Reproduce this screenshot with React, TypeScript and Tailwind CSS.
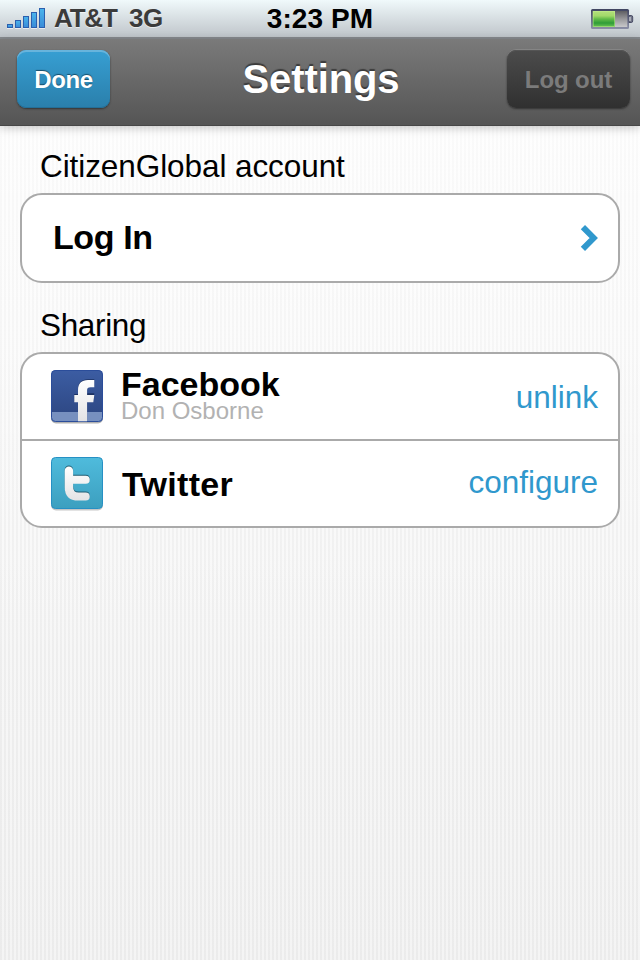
import React from "react";

function SignalBars() {
  const bars = [
    [7, 24, 4],
    [15, 20, 8],
    [23, 16, 12],
    [31, 12, 16],
    [39, 8, 20],
  ];
  return (
    <svg width="46" height="37" viewBox="0 0 46 37" className="shrink-0">
      <defs>
        <linearGradient id="bar" x1="0" y1="0" x2="0" y2="1">
          <stop offset="0" stopColor="#49b4ec" />
          <stop offset="1" stopColor="#3a8bd8" />
        </linearGradient>
      </defs>
      {bars.map(([x, y, h]) => (
        <g key={x}>
          <rect x={x} y={y + 1} width="6" height={h} fill="#fff" opacity=".6" />
          <rect x={x + 0.5} y={y + 0.5} width="5" height={h - 1} fill="url(#bar)" stroke="#2b5fae" />
        </g>
      ))}
    </svg>
  );
}

function Battery() {
  return (
    <svg width="44" height="22" viewBox="0 0 44 22" className="shrink-0">
      <defs>
        <linearGradient id="charge" x1="0" y1="0" x2="0" y2="1">
          <stop offset="0" stopColor="#b4e07c" />
          <stop offset=".3" stopColor="#a2d96a" />
          <stop offset=".5" stopColor="#62bb48" />
          <stop offset=".75" stopColor="#2f9c38" />
          <stop offset="1" stopColor="#6bc455" />
        </linearGradient>
        <linearGradient id="empty" x1="0" y1="0" x2="0" y2="1">
          <stop offset="0" stopColor="#5e5e62" />
          <stop offset=".5" stopColor="#98989b" />
          <stop offset="1" stopColor="#c8c8ca" />
        </linearGradient>
        <linearGradient id="case" x1="0" y1="0" x2="0" y2="1">
          <stop offset="0" stopColor="#3f4460" />
          <stop offset="1" stopColor="#8b8fa6" />
        </linearGradient>
      </defs>
      <rect x="1" y="1" width="38" height="20" rx="1.5" fill="url(#case)" />
      <rect x="2.8" y="3" width="22.2" height="16" fill="url(#charge)" />
      <rect x="3.3" y="3.5" width="21.2" height="15" fill="none" stroke="#c6f08e" strokeOpacity=".5" />
      <rect x="25" y="3" width="12.3" height="16" fill="url(#empty)" />
      <path d="M39 7.500h2.200q1.500 0 1.500 1.500v4q0 1.500-1.500 1.500H39z" fill="#737789" stroke="#4a4e66" />
      <rect x="39" y="9" width="2" height="4" fill="#a9acb8" />
    </svg>
  );
}

function FacebookIcon() {
  return (
    <svg width="54" height="55" viewBox="0 0 54 55" className="shrink-0">
      <defs>
        <linearGradient id="fb" x1="0" y1="0" x2="0" y2="1">
          <stop offset="0" stopColor="#3c5da3" />
          <stop offset="1" stopColor="#2c4580" />
        </linearGradient>
        <linearGradient id="glyph" x1="0" y1="0" x2="0" y2="1">
          <stop offset="0" stopColor="#ffffff" />
          <stop offset="1" stopColor="#e3e3e5" />
        </linearGradient>
        <clipPath id="fbclip">
          <rect x="1" y="0" width="52" height="52" rx="4.500" />
        </clipPath>
      </defs>
      <rect x="1" y="1.500" width="52" height="52" rx="5" fill="#000" opacity=".3" />
      <g clipPath="url(#fbclip)">
        <rect x="1" width="52" height="52" fill="url(#fb)" />
        <rect x="1" y="42" width="52" height="10" fill="#7790bf" />
        <rect x="1.500" y=".5" width="51" height="51" rx="4" fill="none" stroke="#2b4d9a" />
        <path
          d="M28 51V31.300H24.300V24H28V19.500C28 12.500 31.500 9.200 38 9.200H44.300V16.400H40.500C38 16.400 37.100 17.300 37.100 19.700V23.200H44.300L43.300 31H37.100V51Z"
          fill="#1d3263"
        />
        <path
          d="M28 51.200V32.200H24.300V24.900H28V20.400C28 13.400 31.500 10.100 38 10.100H44.300V17.200H40.500C38 17.200 37.100 18.100 37.100 20.500V24.900H44.300L43.300 32.200H37.100V51.200Z"
          fill="url(#glyph)"
        />
      </g>
    </svg>
  );
}

function TwitterIcon() {
  const shape =
    "M13.500 12.700a4.200 4.200 0 0 1 8.400 0V17.700H34.500a4.050 4.050 0 0 1 0 8.100H21.900V29q0 5.500 5.500 5.500H34.500a4.050 4.050 0 0 1 0 8.100H27q-13.500 0-13.500-13.600Z";
  return (
    <svg width="54" height="55" viewBox="0 0 54 55" className="shrink-0">
      <defs>
        <linearGradient id="tw" x1="0" y1="0" x2="0" y2="1">
          <stop offset="0" stopColor="#4fbbdc" />
          <stop offset="1" stopColor="#3c9fbf" />
        </linearGradient>
      </defs>
      <rect x="1" y="1.500" width="52" height="52" rx="5" fill="#000" opacity=".22" />
      <rect x="1.500" y=".5" width="51" height="51" rx="4" fill="url(#tw)" stroke="#2690c4" />
      <g transform="translate(1.200 0)">
        <path d={shape} fill="#1f5c72" />
        <path d={shape} fill="url(#glyph)" transform="translate(0 1)" />
      </g>
    </svg>
  );
}

export default function App() {
  return (
    <div className="flex h-[960px] w-[640px] flex-col overflow-hidden bg-linear-to-b from-[#fdfdfd] to-[#f4f4f4] font-['Liberation_Sans',Arial,sans-serif] text-black">
      <div className="flex h-full flex-col bg-[linear-gradient(180deg,rgba(255,255,255,0.7),rgba(255,255,255,0)_70%),repeating-linear-gradient(90deg,rgba(0,0,0,0.035)_0px,rgba(0,0,0,0.035)_2px,transparent_2px,transparent_4px)]">
        <div className="grid h-[39px] shrink-0 grid-cols-3 border-b-2 border-[#868a8e] bg-linear-to-b from-[#f0f9fb] to-[#bfc5ca]">
          <div className="flex text-[26px] leading-[36px] font-bold whitespace-nowrap text-[#3b3b3b] [text-shadow:0_1px_0_#ffffff99]">
            <SignalBars />
            <span className="ml-2 w-[75px] tracking-[-1.2px]">AT&amp;T</span>
            <span className="tracking-[-0.5px]">3G</span>
          </div>
          <div className="text-center text-[28px] leading-[37px] font-bold tracking-[0.1px] whitespace-nowrap">3:23 PM</div>
          <div className="flex justify-end pt-2 pr-[6px]">
            <Battery />
          </div>
        </div>

        <header className="flex h-[87px] shrink-0 items-start justify-between border-b border-[#474747] bg-linear-to-b from-[#7a7a7a] to-[#555555] pt-[11px] pr-[10px] pl-[17px] font-bold shadow-[0_2px_9px_rgba(0,0,0,0.22)]">
          <div className="w-[123px]">
            <button className="block h-[58px] w-[93px] rounded-[9px] bg-linear-to-b from-[#379fd3] to-[#2a7fab] text-center text-2xl leading-[59px] tracking-[-0.4px] text-white shadow-[inset_0_2px_0_#68b4dc,inset_0_-1px_0_#246f97,0_1px_2px_#333] [text-shadow:0_-1px_1px_#174c68]">
              Done
            </button>
          </div>
          <h1 className="pr-[5px] text-[40px] leading-[58px] tracking-[-0.1px] text-white [text-shadow:0_-2px_1px_#3b3b3b]">Settings</h1>
          <button className="h-[58px] w-[123px] rounded-[9px] bg-linear-to-b from-[#4c4c4c] to-[#303030] text-center text-2xl leading-[59px] tracking-[-0.1px] text-[#7b7b7b] shadow-[inset_0_1px_0_#555,0_-1px_0_#858585,0_1px_2px_#333]">
            Log out
          </button>
        </header>

        <main className="flex flex-col px-5 pt-5">
          <h2 className="mb-[7px] pl-5 text-[31.500px] leading-[40px] tracking-[-0.08px]">CitizenGlobal account</h2>
          <div className="flex h-[90px] items-center justify-between rounded-[22px] border-2 border-[#aaaaaa] bg-white pr-[19px] pl-[31px]">
            <span className="pb-[2px] text-[34px] leading-[84px] font-bold tracking-[-0.4px]">Log In</span>
            <svg width="19" height="28" viewBox="0 0 19 28">
              <path d="M2.900 3.200L13.700 14L2.900 24.800" fill="none" stroke="#3098cd" strokeWidth="6" />
            </svg>
          </div>

          <h2 className="mt-[22px] mb-[7px] pl-5 text-[31.500px] leading-[40px] tracking-[-0.35px]">Sharing</h2>
          <div className="divide-y-2 divide-[#aaaaaa] rounded-[22px] border-2 border-[#aaaaaa] bg-white">
            <div className="flex h-[87px] items-start pr-5 pl-7">
              <div className="pt-4">
                <FacebookIcon />
              </div>
              <div className="flex flex-1 flex-col pt-[14px] pl-[17px]">
                <span className="text-[34px] leading-[32px] font-bold">Facebook</span>
                <span className="text-2xl leading-[22px] text-[#b2b2b2]">Don Osborne</span>
              </div>
              <span className="pt-[23px] text-[31.500px] leading-[40px] text-[#3098cd]">unlink</span>
            </div>
            <div className="flex h-[85px] items-start pr-5 pl-7">
              <div className="pt-4">
                <TwitterIcon />
              </div>
              <span className="flex-1 pt-[23px] pl-[18px] text-[34px] leading-[40px] font-bold tracking-[0.3px]">Twitter</span>
              <span className="pt-[21px] text-[31.500px] leading-[40px] text-[#3098cd]">configure</span>
            </div>
          </div>
        </main>
      </div>
    </div>
  );
}
